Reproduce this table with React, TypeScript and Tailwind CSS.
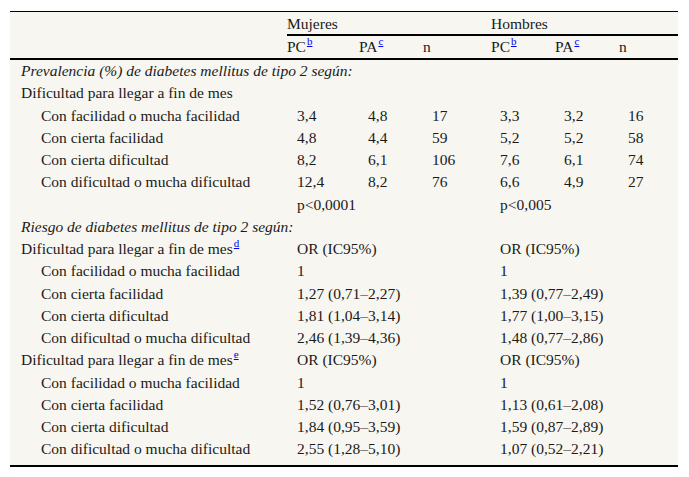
const Sup = ({ c }: { c: string }) => (
  <span className="relative -top-[7px] ml-px text-[11px] leading-none text-[#0000ee] underline">{c}</span>
);

const prev = [
  ['Con facilidad o mucha facilidad', '3,4', '4,8', '17', '3,3', '3,2', '16'],
  ['Con cierta facilidad', '4,8', '4,4', '59', '5,2', '5,2', '58'],
  ['Con cierta dificultad', '8,2', '6,1', '106', '7,6', '6,1', '74'],
  ['Con dificultad o mucha dificultad', '12,4', '8,2', '76', '6,6', '4,9', '27'],
];

const riskD = [
  ['Con facilidad o mucha facilidad', '1', '1'],
  ['Con cierta facilidad', '1,27 (0,71–2,27)', '1,39 (0,77–2,49)'],
  ['Con cierta dificultad', '1,81 (1,04–3,14)', '1,77 (1,00–3,15)'],
  ['Con dificultad o mucha dificultad', '2,46 (1,39–4,36)', '1,48 (0,77–2,86)'],
];

const riskE = [
  ['Con facilidad o mucha facilidad', '1', '1'],
  ['Con cierta facilidad', '1,52 (0,76–3,01)', '1,13 (0,61–2,08)'],
  ['Con cierta dificultad', '1,84 (0,95–3,59)', '1,59 (0,87–2,89)'],
  ['Con dificultad o mucha dificultad', '2,55 (1,28–5,10)', '1,07 (0,52–2,21)'],
];

const td = 'h-[22.25px] p-0 align-middle whitespace-nowrap';
const th = 'p-0 text-left font-normal align-middle whitespace-nowrap';

function SectionTitle({ text }: { text: string }) {
  return (
    <tr>
      <td colSpan={7} className={`${td} pl-[11px] italic`}>
        {text}
      </td>
    </tr>
  );
}

function GroupRow({ text, sup, right }: { text: string; sup?: string; right?: boolean }) {
  return (
    <tr>
      <td className={`${td} pl-[11px]`}>
        {text}
        {sup && <Sup c={sup} />}
      </td>
      {right ? (
        <>
          <td colSpan={3} className={`${td} pl-[10px]`}>OR (IC95%)</td>
          <td colSpan={3} className={`${td} pl-[9px]`}>OR (IC95%)</td>
        </>
      ) : (
        <td colSpan={6} className={td}></td>
      )}
    </tr>
  );
}

function OrRow({ r }: { r: string[] }) {
  return (
    <tr>
      <td className={`${td} pl-[31px]`}>{r[0]}</td>
      <td colSpan={3} className={`${td} pl-[10px]`}>{r[1]}</td>
      <td colSpan={3} className={`${td} pl-[9px]`}>{r[2]}</td>
    </tr>
  );
}

export default function App() {
  return (
    <div className="w-[689px] h-[477px] bg-white pt-[11px] pl-[10px] font-['Liberation_Serif',serif] text-[15.5px] leading-[20px] text-[#1a1a1a]">
      <table className="w-[668px] table-fixed border-separate border-spacing-0 bg-[#f8f6f0] border-t border-t-black border-b-2 border-b-black">
        <colgroup>
          <col className="w-[277px]" />
          <col className="w-[72px]" />
          <col className="w-[64px]" />
          <col className="w-[68px]" />
          <col className="w-[64px]" />
          <col className="w-[64px]" />
          <col />
        </colgroup>
        <thead>
          <tr>
            <th className={`${th} h-[24px] pt-px border-b-2 border-b-transparent`}></th>
            <th colSpan={3} className={`${th} h-[24px] pt-px border-b-2 border-b-black`}>
              Mujeres
            </th>
            <th colSpan={3} className={`${th} h-[24px] pt-px border-b-2 border-b-black`}>
              Hombres
            </th>
          </tr>
          <tr>
            {['', 'PC', 'PA', 'n', 'PC', 'PA', 'n'].map((h, i) => (
              <th key={i} className={`${th} h-[24px] border-b-2 border-b-black`}>
                {h}
                {h === 'PC' && <Sup c="b" />}
                {h === 'PA' && <Sup c="c" />}
              </th>
            ))}
          </tr>
        </thead>
        <tbody>
          <SectionTitle text="Prevalencia (%) de diabetes mellitus de tipo 2 según:" />
          <GroupRow text="Dificultad para llegar a fin de mes" />
          {prev.map(r => (
            <tr key={r[0]}>
              <td className={`${td} pl-[31px]`}>{r[0]}</td>
              {r.slice(1).map((c, i) => (
                <td key={i} className={`${td} ${i === 0 ? 'pl-[10px]' : 'pl-[9px]'}`}>{c}</td>
              ))}
            </tr>
          ))}
          <tr>
            <td className={td}></td>
            <td colSpan={3} className={`${td} pl-[10px]`}>p&lt;0,0001</td>
            <td colSpan={3} className={`${td} pl-[9px]`}>p&lt;0,005</td>
          </tr>
          <SectionTitle text="Riesgo de diabetes mellitus de tipo 2 según:" />
          <GroupRow text="Dificultad para llegar a fin de mes" sup="d" right />
          {riskD.map(r => <OrRow key={r[0]} r={r} />)}
          <GroupRow text="Dificultad para llegar a fin de mes" sup="e" right />
          {riskE.map(r => <OrRow key={r[0]} r={r} />)}
          <tr>
            <td colSpan={7} className="h-[4px] p-0"></td>
          </tr>
        </tbody>
      </table>
    </div>
  );
}
